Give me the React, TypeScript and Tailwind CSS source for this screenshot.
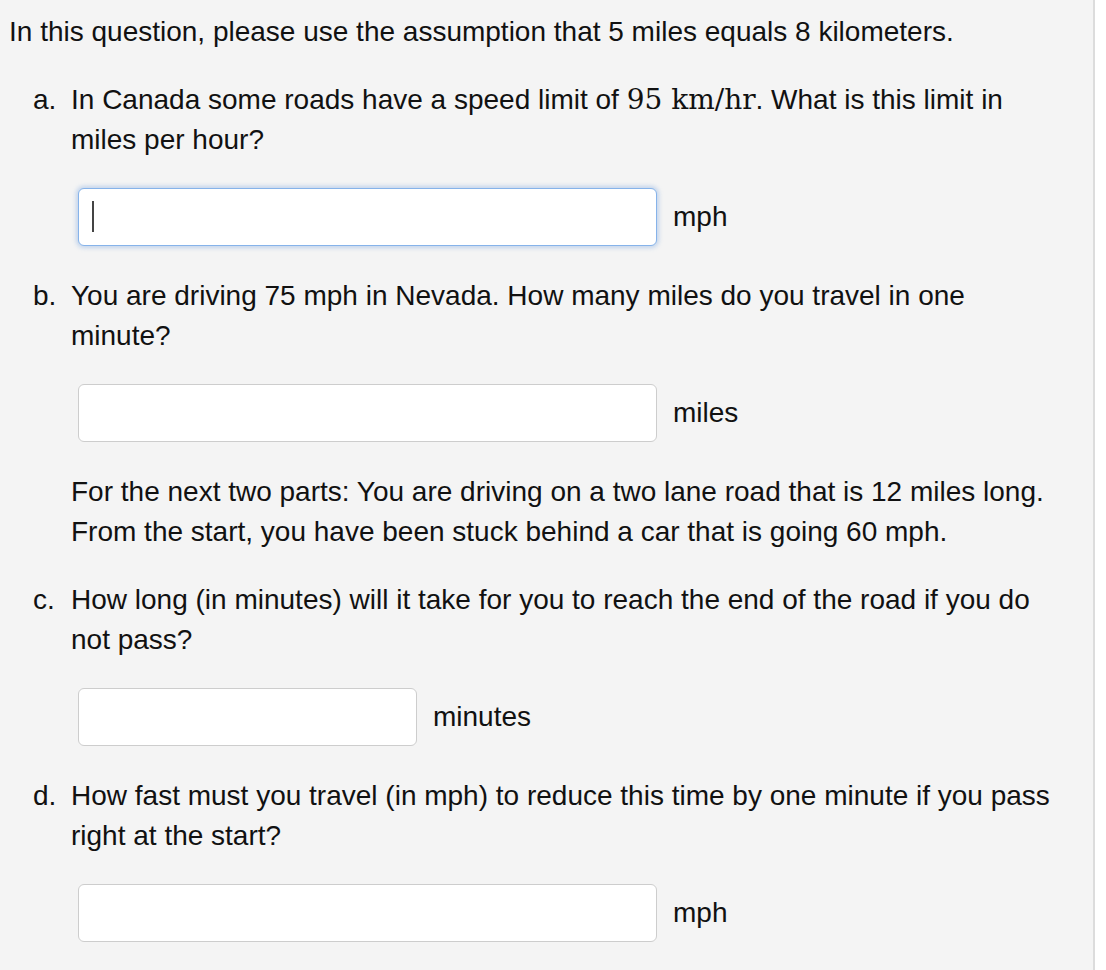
import React from "react";

function Field({ width, unit, focused }: { width: string; unit: string; focused?: boolean }) {
  return (
    <div className="ml-[45px] flex items-center gap-4">
      <div className="relative">
        <input
          type="text"
          className={
            width +
            " h-[58px] rounded-md border bg-white px-3 text-[24px] outline-none " +
            (focused
              ? "border-[#86b3ea] shadow-[0_0_4px_2px_rgba(120,165,225,0.4)]"
              : "border-[#cdcdcd]")
          }
        />
        {focused && (
          <span className="absolute left-[14px] top-[13px] h-[31px] w-[1.5px] bg-[#444]" />
        )}
      </div>
      <span>{unit}</span>
    </div>
  );
}

function Item({ mark, children }: { mark: string; children: React.ReactNode }) {
  return (
    <div className="flex">
      <span className="w-[38px] shrink-0">{mark}</span>
      <p>{children}</p>
    </div>
  );
}

export default function App() {
  return (
    <div
      className="flex min-h-screen text-[28px] leading-[40px] text-[#111]"
      style={{ fontFamily: '"Liberation Sans", Arial, sans-serif' }}
    >
      <div className="w-[1095px] shrink-0 border-r-2 border-[#dcdcdc] bg-[#f4f4f4] pb-8 pl-[9px] pt-[12px]">
        <p>In this question, please use the assumption that 5 miles equals 8 kilometers.</p>

        <div className="mt-[28px] w-[1044px] pl-[24px]">
          <Item mark="a.">
            In Canada some roads have a speed limit of{" "}
            <span className="leading-none" style={{ fontFamily: '"DejaVu Serif", serif' }}>
              95 km/hr
            </span>
            . What is this limit in miles per hour?
          </Item>
          <div className="mt-[28px]">
            <Field width="w-[579px]" unit="mph" focused />
          </div>

          <div className="mt-[30px]">
            <Item mark="b.">
              You are driving 75 mph in Nevada. How many miles do you travel in one minute?
            </Item>
          </div>
          <div className="mt-[28px]">
            <Field width="w-[579px]" unit="miles" />
          </div>

          <p className="mt-[30px] pl-[38px]">
            For the next two parts: You are driving on a two lane road that is 12 miles long.
            From the start, you have been stuck behind a car that is going 60 mph.
          </p>

          <div className="mt-[28px]">
            <Item mark="c.">
              How long (in minutes) will it take for you to reach the end of the road if you do
              not pass?
            </Item>
          </div>
          <div className="mt-[28px]">
            <Field width="w-[339px]" unit="minutes" />
          </div>

          <div className="mt-[30px]">
            <Item mark="d.">
              How fast must you travel (in mph) to reduce this time by one minute if you pass
              right at the start?
            </Item>
          </div>
          <div className="mt-[28px]">
            <Field width="w-[579px]" unit="mph" />
          </div>
        </div>
      </div>
      <div className="flex-1 bg-white" />
    </div>
  );
}
